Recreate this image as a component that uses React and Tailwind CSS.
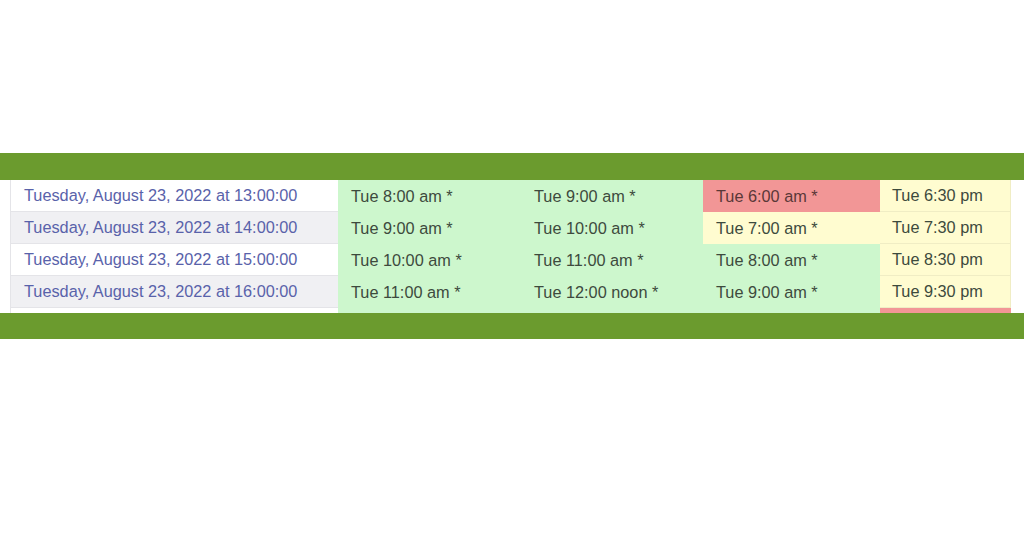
import React from 'react';

const G = 'bg-[#cdf7cd]';
const Y = 'bg-[#fffcd0]';
const R = 'bg-[#f29696]';

const rows = [
  { date: 'Tuesday, August 23, 2022 at 13:00:00', alt: false, cells: [['Tue 8:00 am *', G], ['Tue 9:00 am *', G], ['Tue 6:00 am *', R], ['Tue 6:30 pm', Y]] },
  { date: 'Tuesday, August 23, 2022 at 14:00:00', alt: true, cells: [['Tue 9:00 am *', G], ['Tue 10:00 am *', G], ['Tue 7:00 am *', Y], ['Tue 7:30 pm', Y]] },
  { date: 'Tuesday, August 23, 2022 at 15:00:00', alt: false, cells: [['Tue 10:00 am *', G], ['Tue 11:00 am *', G], ['Tue 8:00 am *', G], ['Tue 8:30 pm', Y]] },
  { date: 'Tuesday, August 23, 2022 at 16:00:00', alt: true, cells: [['Tue 11:00 am *', G], ['Tue 12:00 noon *', G], ['Tue 9:00 am *', G], ['Tue 9:30 pm', Y]] },
];

const cellPad = ['pl-[13px]', 'pl-[12px]', 'pl-[13px]', 'pl-[12px]'];

export default function App() {
  return (
    <div className="w-[1024px] h-[560px] bg-white pt-[153px] font-['Liberation_Sans',Arial,sans-serif] overflow-hidden">
      <div className="h-[27px] bg-[#6b9b2e]" />

      <div className="pl-[10px]">
        <div className="grid grid-cols-[328px_184px_181px_177px_131px]">
          {rows.map((r) => (
            <React.Fragment key={r.date}>
              <div
                className={`h-[32px] flex items-center pl-[13px] border-l border-b border-[#e4e4e8] text-[16.3px] text-[#5962aa] ${r.alt ? 'bg-[#f0f0f3]' : 'bg-white'}`}
              >
                {r.date}
              </div>
              {r.cells.map(([t, bg], i) => (
                <div
                  key={i}
                  className={`h-[32px] flex items-center ${cellPad[i]} text-[16.3px] ${bg} ${bg === R ? 'text-[#5a3838]' : 'text-[#3d4a3d]'} ${i === 3 ? 'border-b border-r border-[#f0edc4]' : ''}`}
                >
                  {t}
                </div>
              ))}
            </React.Fragment>
          ))}
          <div className="h-[5px] bg-white border-l border-[#e4e4e8]" />
          <div className={`h-[5px] ${G}`} />
          <div className={`h-[5px] ${G}`} />
          <div className={`h-[5px] ${G}`} />
          <div className={`h-[5px] ${R}`} />
        </div>
      </div>

      <div className="h-[26px] bg-[#6b9b2e]" />
    </div>
  );
}
